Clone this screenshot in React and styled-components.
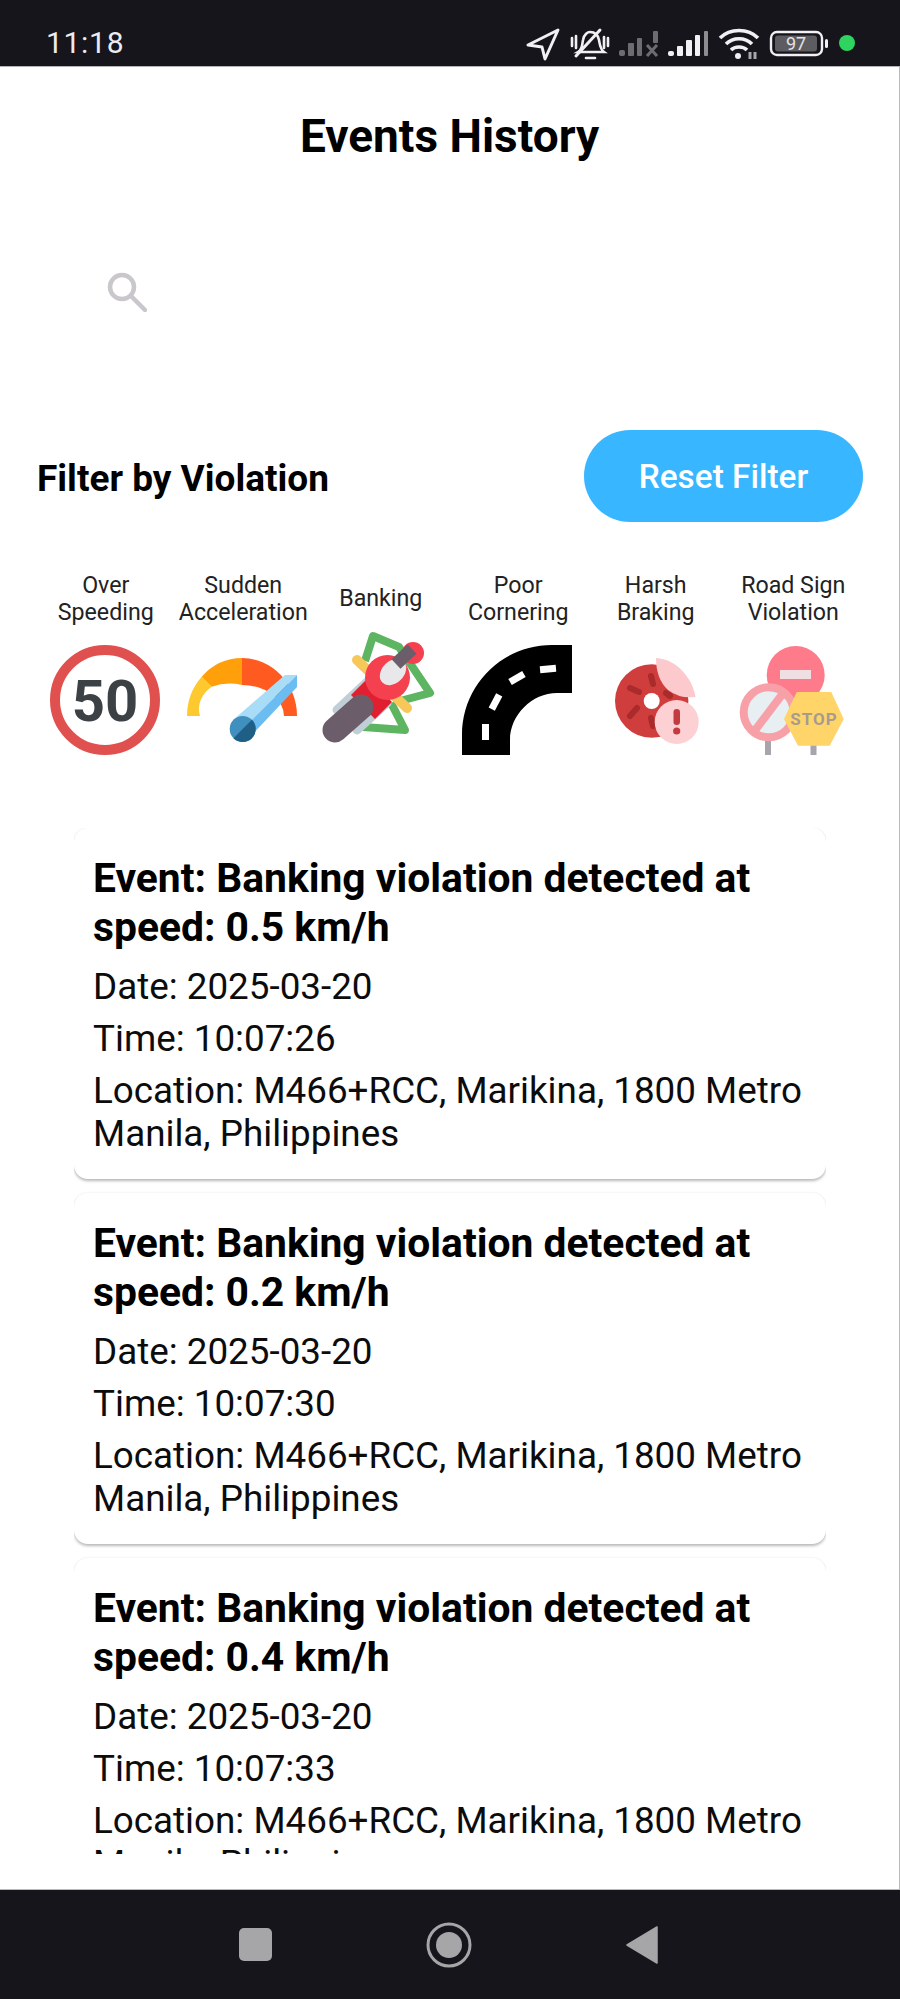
import React from "react";
import styled, { createGlobalStyle } from "styled-components";

const GlobalStyle = createGlobalStyle`
  html, body { margin: 0; padding: 0; background: #fff; }
  * { box-sizing: border-box; }
  body { font-family: Roboto, "Noto Sans", sans-serif; }
`;

const Phone = styled.div`
  width: 900px;
  height: 1999px;
  display: flex;
  flex-direction: column;
  overflow: hidden;
`;

const StatusBar = styled.div`
  height: 67px;
  flex: none;
  background: #16151b;
  border-bottom: 1px solid #b4b4b6;
  display: flex;
  align-items: center;
  justify-content: space-between;
  padding: 20px 42px 0 46px;
`;

const Clock = styled.div`
  color: #ecebee;
  font-size: 30px;
  line-height: 34px;
  letter-spacing: 0.7px;
`;

const StatusIcons = styled.svg`
  display: block;
  width: 362px;
  height: 36px;
`;

const Screen = styled.div`
  flex: 1;
  min-height: 0;
  background: #fff;
  border-right: 1px solid #b9b9bb;
  border-bottom: 1px solid #b9b9bb;
  display: flex;
  flex-direction: column;
`;

const Title = styled.h1`
  margin: 43px 0 0;
  font-size: 46px;
  line-height: 52px;
  font-weight: 700;
  color: #000;
  text-align: center;
`;

const SearchBar = styled.div`
  height: 40px;
  margin: 110px 0 0 107px;
  display: flex;
  align-items: center;
`;

const FilterHead = styled.div`
  display: flex;
  align-items: center;
  justify-content: space-between;
  margin: 118px 36px 0 37px;
`;

const FilterLabel = styled.div`
  padding-top: 4px;
  font-size: 37px;
  font-weight: 700;
  color: #000;
`;

const ResetButton = styled.button`
  width: 279px;
  height: 92px;
  border: 0;
  border-radius: 46px;
  background: #38b6ff;
  color: #fff;
  font-family: inherit;
  font-size: 33.4px;
  font-weight: 500;
`;

const Violations = styled.div`
  display: grid;
  grid-template-columns: repeat(6, 1fr);
  margin: 42px 38px 0 36px;
`;

const Violation = styled.div`
  display: flex;
  flex-direction: column;
  align-items: center;
`;

const ViolationName = styled.div`
  height: 69px;
  padding-left: 2px;
  display: flex;
  align-items: center;
  text-align: center;
  font-size: 23.2px;
  line-height: 27px;
  color: #222;
  white-space: pre-line;
`;

const ViolationIcon = styled.svg`
  display: block;
  width: 110px;
  height: 110px;
  margin-top: 12px;
  overflow: visible;
`;

const EventList = styled.div`
  height: 1026px;
  margin: 73px 73px 0 74px;
  overflow: hidden;
  display: flex;
  flex-direction: column;
  gap: 14px;
`;

const EventCard = styled.div`
  flex: none;
  height: 351px;
  padding: 26px 19px 0 19px;
  background: #fff;
  border-radius: 14px;
  box-shadow: 0 2px 3px rgba(0, 0, 0, 0.28), 0 -1px 2px rgba(0, 0, 0, 0.03);
`;

const EventTitle = styled.div`
  font-size: 40.8px;
  line-height: 49px;
  font-weight: 700;
  color: #000;
  margin-bottom: 13px;
`;

const EventLine = styled.div`
  font-size: 36.8px;
  line-height: 43px;
  color: #0c0c0c;
  margin-bottom: 9px;
`;

const NavBar = styled.div`
  flex: none;
  height: 109px;
  background: #16151b;
  display: flex;
  align-items: center;
  gap: 154px;
  padding-left: 239px;
`;

const NavSquare = styled.div`
  width: 33px;
  height: 33px;
  border-radius: 5px;
  background: #a6a5a8;
`;

const NavIcon = styled.svg`
  display: block;
  width: 46px;
  height: 46px;
`;

const NavBack = styled.svg`
  display: block;
  width: 32px;
  height: 38px;
`;

const STROKE = "#f1f0f3";
const DIM = "#6d6c70";

// x offsets in this svg are page x minus 496
function StatusGlyphs() {
  return (
    <StatusIcons viewBox="0 0 362 36">
      <path d="M62 5 L32 20 L46 22 L49 34 Z" fill="none" stroke={STROKE} strokeWidth="3" strokeLinejoin="round" />
      <g fill="none" stroke={STROKE} strokeWidth="2.6" strokeLinecap="round">
        <path d="M82 27 C87 24 86 19 87 15 C88 9 92 7 94 7 C99 7 102 10 103 15 C104 20 104 24 108 27 Z" />
        <path d="M90 33 H99" />
        <path d="M76 13 V21 M80 11 V23 M112 13 V21 M108 12 V23" />
        <path d="M104 5 L80 31" strokeWidth="3" />
      </g>
      <g fill={DIM}>
        <rect x="123" y="25" width="6" height="6" rx="2" />
        <rect x="132" y="18" width="6" height="13" rx="1" />
        <rect x="141" y="13" width="5" height="18" rx="1" />
        <rect x="157" y="6" width="5" height="12" rx="1" />
        <path d="M151 20 L161 31 M161 20 L151 31" stroke={DIM} strokeWidth="3" />
      </g>
      <g fill={STROKE}>
        <rect x="172" y="26" width="6" height="5" rx="2" />
        <rect x="181" y="21" width="6" height="10" rx="1" />
        <rect x="190" y="15" width="6" height="16" rx="1" />
        <rect x="199" y="10" width="5" height="21" rx="1" />
        <rect x="208" y="6" width="4" height="25" rx="1" fill="#8d8c90" />
      </g>
      <g fill="none" stroke={STROKE} strokeWidth="3.6">
        <path d="M224 13 C234 3 252 3 262 13" />
        <path d="M230 19 C237 12 249 12 256 19" />
        <path d="M235 25 C239 21 247 21 251 25" />
      </g>
      <circle cx="242" cy="31" r="3" fill={STROKE} />
      <path d="M254 27 V34 M259 27 V34" stroke="#a8a7ab" strokeWidth="3" />
      <rect x="275" y="7" width="51" height="23" rx="6" fill="none" stroke={STROKE} strokeWidth="2.4" />
      <rect x="279" y="10.5" width="42" height="16" rx="3" fill="#5d5c60" />
      <rect x="329" y="14" width="3" height="9" rx="1.5" fill={STROKE} />
      <text x="300" y="25" textAnchor="middle" fontFamily="Roboto, sans-serif" fontSize="18" fill="#e4e3e6">97</text>
      <circle cx="351" cy="18" r="8" fill="#2fd35f" />
    </StatusIcons>
  );
}

function SpeedIcon() {
  return (
    <ViolationIcon viewBox="0 0 110 110">
      <circle cx="55" cy="55" r="50" fill="#fff" stroke="#e0504f" strokeWidth="10" />
      <text x="55" y="76" textAnchor="middle" fontFamily="Roboto, sans-serif" fontWeight="700" fontSize="58" fill="#3c4146">50</text>
    </ViolationIcon>
  );
}

function GaugeIcon() {
  return (
    <ViolationIcon viewBox="0 0 110 110">
      <path d="M0 71 A55 58 0 0 1 14.7 31.7 L24.7 41.7 A42 31 0 0 0 13 71 Z" fill="#fec82f" />
      <path d="M14.7 31.7 A55 58 0 0 1 55 13 V40 A42 31 0 0 0 24.7 41.7 Z" fill="#ff9f0a" />
      <path d="M55 13 A55 58 0 0 1 110 71 H97 A42 31 0 0 0 55 40 Z" fill="#ff5a1f" />
      <path d="M46 75 L98 30 H110 L55.7 84 Z" fill="#a9dcf7" />
      <path d="M55.7 84 L110 30 V42 L63 92 Z" fill="#6bbcf0" />
      <circle cx="55.7" cy="84" r="13" fill="#3f8fbf" />
      <path d="M46.5 93.2 A13 13 0 0 0 64.9 74.8 Z" fill="#1f5f85" />
    </ViolationIcon>
  );
}

function BankingIcon() {
  return (
    <ViolationIcon viewBox="0 0 110 110">
      <g fill="none" stroke="#5db562" strokeWidth="8" strokeLinejoin="round">
        <path d="M40 16 L48 -9 L74 2 L105 48 L75 56" />
        <path d="M38 82 L80 85 L66 58" />
      </g>
      <path d="M32 15 L82 63" stroke="#f8c75a" strokeWidth="10" strokeLinecap="round" />
      <path d="M12 65 L42 37 M32 85 L62 58" stroke="#c0ced6" strokeWidth="9" strokeLinecap="round" />
      <path d="M38 62 L55 45" stroke="#e02030" strokeWidth="34" />
      <path d="M10 85 L36 62" stroke="#6b5e6a" strokeWidth="25" strokeLinecap="round" />
      <circle cx="62.5" cy="32.5" r="22.5" fill="#f4404f" />
      <ellipse cx="68" cy="27" rx="15" ry="11" transform="rotate(-45 68 27)" fill="#e8e8ea" />
      <circle cx="88" cy="8" r="11" fill="#f4404f" />
      <path d="M71 19 L87 4" stroke="#6b5e6a" strokeWidth="13" />
    </ViolationIcon>
  );
}

function RoadIcon() {
  return (
    <ViolationIcon viewBox="0 0 110 110">
      <path d="M0 110 V90 C0 40 40 0 90 0 H110 V48 H95 C70 48 48 70 48 95 V110 Z" fill="#000" />
      <g fill="#fff">
        <rect x="20" y="79" width="7" height="16" />
        <rect x="30" y="49" width="7" height="16" transform="rotate(28 33.5 57)" />
        <rect x="51.5" y="25" width="7" height="16" transform="rotate(60 55 33)" />
        <rect x="82.5" y="16" width="7" height="16" transform="rotate(85 86 24)" />
      </g>
    </ViolationIcon>
  );
}

function BrakeIcon() {
  return (
    <ViolationIcon viewBox="0 0 110 110">
      <circle cx="51.7" cy="56" r="36.7" fill="#cf3d3d" />
      <circle cx="51.7" cy="56" r="8" fill="#fff" />
      <path d="M30 43 L39 47 M51 31 L53 39 M30 71 L37 63 M51 73 L53 81 M66 48 L70 51" stroke="#a92b2b" strokeWidth="6" strokeLinecap="round" />
      <path d="M56 13 C76 14 92 32 95.5 52 Q80 54 68 45 Q56 34 56 13 Z" fill="#fcc9cc" />
      <circle cx="76.7" cy="77" r="22" fill="#fdd0d3" />
      <rect x="73.5" y="64" width="6.5" height="16" rx="3.2" fill="#c33a3f" />
      <circle cx="76.7" cy="86" r="3.6" fill="#c33a3f" />
    </ViolationIcon>
  );
}

function SignsIcon() {
  return (
    <ViolationIcon viewBox="0 0 110 110">
      <rect x="28" y="95" width="6" height="15" fill="#a8a4ad" />
      <rect x="73.5" y="95" width="6" height="15" fill="#a8a4ad" />
      <circle cx="58.7" cy="30" r="29" fill="#fd7b8a" />
      <rect x="43" y="25" width="31" height="9" fill="#f0dfe2" />
      <circle cx="31.7" cy="67.3" r="25" fill="#e8eff3" stroke="#f8a0a8" strokeWidth="8" />
      <path d="M16 88 L47 47" stroke="#f8a0a8" strokeWidth="8" />
      <path d="M47 74 L59.7 47 H94.3 L106.7 74 L92.7 100.7 H61 Z" fill="#ffd56a" />
      <text x="77" y="80" textAnchor="middle" fontFamily="Roboto, sans-serif" fontWeight="700" fontSize="17" letterSpacing="1" fill="#a89a8f">STOP</text>
    </ViolationIcon>
  );
}

const violations = [
  { name: "Over\nSpeeding", icon: SpeedIcon },
  { name: "Sudden\nAcceleration", icon: GaugeIcon },
  { name: "Banking", icon: BankingIcon },
  { name: "Poor\nCornering", icon: RoadIcon },
  { name: "Harsh\nBraking", icon: BrakeIcon },
  { name: "Road Sign\nViolation", icon: SignsIcon },
];

const events = [
  { speed: "0.5", time: "10:07:26" },
  { speed: "0.2", time: "10:07:30" },
  { speed: "0.4", time: "10:07:33" },
];

export default function App() {
  return (
    <Phone>
      <GlobalStyle />
      <StatusBar>
        <Clock>11:18</Clock>
        <StatusGlyphs />
      </StatusBar>
      <Screen>
        <Title>Events History</Title>
        <SearchBar>
          <svg width="40" height="40" viewBox="0 0 40 40" fill="none" stroke="#c9c7cc" strokeWidth="4.5">
            <circle cx="15" cy="15" r="12" />
            <path d="M24 24 L38 38" strokeLinecap="round" />
          </svg>
        </SearchBar>
        <FilterHead>
          <FilterLabel>Filter by Violation</FilterLabel>
          <ResetButton>Reset Filter</ResetButton>
        </FilterHead>
        <Violations>
          {violations.map((v) => (
            <Violation key={v.name}>
              <ViolationName>{v.name}</ViolationName>
              <v.icon />
            </Violation>
          ))}
        </Violations>
        <EventList>
          {events.map((e) => (
            <EventCard key={e.time}>
              <EventTitle>Event: Banking violation detected at speed: {e.speed} km/h</EventTitle>
              <EventLine>Date: 2025-03-20</EventLine>
              <EventLine>Time: {e.time}</EventLine>
              <EventLine>Location: M466+RCC, Marikina, 1800 Metro Manila, Philippines</EventLine>
            </EventCard>
          ))}
        </EventList>
      </Screen>
      <NavBar>
        <NavSquare />
        <NavIcon viewBox="0 0 46 46">
          <circle cx="23" cy="23" r="21" fill="none" stroke="#a6a5a8" strokeWidth="3" />
          <circle cx="23" cy="23" r="13" fill="#a6a5a8" />
        </NavIcon>
        <NavBack viewBox="0 0 32 38">
          <path d="M31 1 V37 L1 19 Z" fill="#a6a5a8" stroke="#a6a5a8" strokeWidth="1.5" strokeLinejoin="round" />
        </NavBack>
      </NavBar>
    </Phone>
  );
}
